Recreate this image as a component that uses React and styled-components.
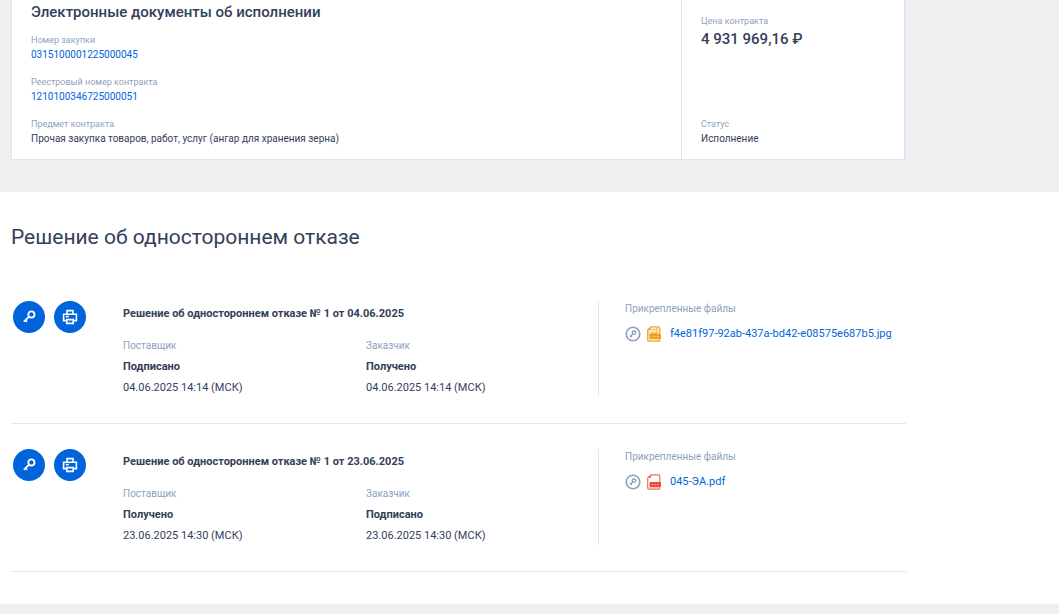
import React from 'react';
import styled, { createGlobalStyle } from 'styled-components';

const GlobalStyle = createGlobalStyle`
  * {
    box-sizing: border-box;
  }
  body {
    margin: 0;
    background: #eeeff1;
    color: #334059;
    font-family: Roboto, sans-serif;
    font-size: 11px;
    line-height: 14px;
  }
`;

const ContainerEl = styled.div`
  max-width: 917px;
  padding: 0 11px;
`;

const CardEl = styled.section`
  display: grid;
  grid-template-columns: 3fr 1fr;
  margin-bottom: 32px;
  background: #fff;
  border: 1px solid #dce4f0;
  border-top: 0;
  border-right-width: 2px;
  border-radius: 0 0 2px 2px;
`;

const CardMainEl = styled.div`
  padding: 2px 19px 13px;
`;

const CardSideEl = styled.div`
  display: flex;
  flex-direction: column;
  justify-content: space-between;
  padding: 15px 19px 13px;
  border-left: 1px solid #e0e3f0;
`;

const CardTitleEl = styled.h1`
  margin: 0 0 12px;
  font-size: 15px;
  line-height: 20px;
  font-weight: 500;
`;

const FieldEl = styled.div`
  & + & {
    margin-top: 14px;
  }
`;

const FieldLabelEl = styled.div`
  color: #909fbe;
  font-size: 9px;
  line-height: 12px;
`;

const FieldValueEl = styled.div`
  margin-top: 2px;
  font-size: 10px;
  line-height: 14px;
`;

const PriceEl = styled.div`
  margin-top: 2px;
  font-size: 15px;
  line-height: 20px;
  font-weight: 500;
`;

const LinkEl = styled.a`
  color: #0065dc;
  text-decoration: none;
  &:hover {
    text-decoration: underline;
  }
`;

const DocumentsEl = styled.main`
  padding: 32px 0;
  background: #fff;
`;

const HeadingEl = styled.h2`
  margin: 0 0 26px;
  font-size: 21px;
  line-height: 26px;
  font-weight: 400;
`;

const RowEl = styled.article`
  display: grid;
  grid-template-columns: 112px minmax(0, 475px) 1fr;
  padding: 25px 0 26px;
  border-bottom: 1px solid #e4e5f1;
`;

const ActionsEl = styled.div`
  display: flex;
  align-items: flex-start;
  gap: 9px;
  padding-left: 2px;
`;

const ActionButtonEl = styled.button`
  display: flex;
  align-items: center;
  justify-content: center;
  width: 32px;
  height: 32px;
  padding: 0;
  color: #fff;
  background: #0065dc;
  border: 0;
  border-radius: 50%;
  cursor: pointer;
`;

const RowTitleEl = styled.h3`
  margin: 0;
  padding: 6px 0 18px;
  font-size: 11px;
  line-height: 14px;
  font-weight: 700;
`;

const PartiesEl = styled.div`
  display: grid;
  grid-template-columns: 243px 1fr;
`;

const PartyEl = styled.div`
  display: flex;
  flex-direction: column;
  gap: 7px;
`;

const CaptionEl = styled.div`
  color: #909fbe;
  font-size: 10px;
  line-height: 14px;
`;

const StatusEl = styled.div`
  font-weight: 700;
`;

const FilesEl = styled.div`
  min-height: 96px;
  padding: 1px 0 0 26px;
  border-left: 1px solid #e4e5f1;
`;

const FileEl = styled.div`
  display: flex;
  align-items: center;
  gap: 6px;
  margin-top: 10px;
`;

const FileLinkEl = styled(LinkEl)`
  padding-left: 3px;
`;

const SignatureButtonEl = styled.button`
  display: flex;
  padding: 0;
  background: none;
  border: 0;
  cursor: pointer;
`;

const KeyIcon = () => (
  <svg width="16" height="16" viewBox="0 0 16 16" fill="none" stroke="currentColor" strokeWidth="1.8">
    <circle cx="10.4" cy="5.4" r="3.1" />
    <path d="M8.200 7.600 2.800 12.600M4 10.600l2 2.200" />
  </svg>
);

const PrinterIcon = () => (
  <svg width="16" height="16" viewBox="0 0 16 16" fill="none" stroke="currentColor" strokeWidth="1.6">
    <path d="M5 5V1.600h6V5M4.500 11.600H1.600V5.200h12.800v6.400h-2.900" />
    <path d="M4.800 10.600h6.400v3.800H4.800z" />
    <path d="M3.800 7.600h3" />
  </svg>
);

const SignatureIcon = () => (
  <svg width="16" height="16" viewBox="0 0 16 16" fill="none" stroke="#909fbe">
    <circle cx="8" cy="8" r="6.8" strokeWidth="1.6" />
    <circle cx="9" cy="6.7" r="1.7" strokeWidth="1.4" />
    <path d="M7.8 7.9 5 10.700M5.400 9.600l1.500 1.400" strokeWidth="1.4" />
  </svg>
);

const ImageFileIcon = () => (
  <svg width="14" height="16" viewBox="0 0 14 16">
    <path d="M4 .8h7.500a1.300 1.300 0 0 1 1.300 1.300v11.800a1.300 1.300 0 0 1-1.300 1.300H2A1.300 1.300 0 0 1 .7 13.900V4z" fill="#fbe6bb" stroke="#e9ad35" strokeWidth="1.3" />
    <path d="M4 .8V4H.7z" fill="#e9ad35" />
    <path d="M1.500 9.500 5 6l2 1.500L9.500 5.500l2.500 4z" fill="#e9ad35" />
    <path d="M6 3.500h2M9.500 2.500v2" stroke="#e9ad35" />
    <rect x="2.500" y="8" width="11.500" height="5" rx="1" fill="#e5a320" />
    <path d="M4.500 10.500h7.500" stroke="#f1c465" strokeDasharray="2 .8" />
  </svg>
);

const PdfFileIcon = () => (
  <svg width="14" height="16" viewBox="0 0 14 16">
    <path d="M4 .8h7.500a1.300 1.300 0 0 1 1.300 1.300v11.800a1.300 1.300 0 0 1-1.300 1.300H2A1.300 1.300 0 0 1 .7 13.900V4z" fill="#fff" stroke="#ec6f63" strokeWidth="1.2" />
    <path d="M4 .8V4H.7z" fill="#ec6f63" />
    <path d="M1.500 13.900h10.500" stroke="#f3a59d" />
    <rect x="2.500" y="8" width="11.500" height="5" rx="1" fill="#e74c3c" />
    <path d="M4.500 10.500h7.500" stroke="#f29a91" strokeDasharray="2 .8" />
  </svg>
);

const documents = [
  {
    id: 1,
    title: 'Решение об одностороннем отказе № 1 от 04.06.2025',
    date: '04.06.2025 14:14 (МСК)',
    supplier: 'Подписано',
    customer: 'Получено',
    file: 'f4e81f97-92ab-437a-bd42-e08575e687b5.jpg',
    FileIcon: ImageFileIcon,
  },
  {
    id: 2,
    title: 'Решение об одностороннем отказе № 1 от 23.06.2025',
    date: '23.06.2025 14:30 (МСК)',
    supplier: 'Получено',
    customer: 'Подписано',
    file: '045-ЭА.pdf',
    FileIcon: PdfFileIcon,
  },
];

const Field = ({ label, children }) => (
  <FieldEl>
    <FieldLabelEl>{label}</FieldLabelEl>
    <FieldValueEl>{children}</FieldValueEl>
  </FieldEl>
);

const Party = ({ name, status, date }) => (
  <PartyEl>
    <CaptionEl>{name}</CaptionEl>
    <StatusEl>{status}</StatusEl>
    <div>{date}</div>
  </PartyEl>
);

const DocumentRow = ({ title, date, supplier, customer, file, FileIcon }) => (
  <RowEl>
    <ActionsEl>
      <ActionButtonEl type="button" aria-label="Электронная подпись">
        <KeyIcon />
      </ActionButtonEl>
      <ActionButtonEl type="button" aria-label="Печать">
        <PrinterIcon />
      </ActionButtonEl>
    </ActionsEl>
    <div>
      <RowTitleEl>{title}</RowTitleEl>
      <PartiesEl>
        <Party name="Поставщик" status={supplier} date={date} />
        <Party name="Заказчик" status={customer} date={date} />
      </PartiesEl>
    </div>
    <FilesEl>
      <CaptionEl>Прикрепленные файлы</CaptionEl>
      <FileEl>
        <SignatureButtonEl type="button" aria-label="Подпись файла">
          <SignatureIcon />
        </SignatureButtonEl>
        <FileIcon />
        <FileLinkEl href="#file">{file}</FileLinkEl>
      </FileEl>
    </FilesEl>
  </RowEl>
);

const App = () => (
  <>
    <GlobalStyle />
    <ContainerEl>
      <CardEl>
        <CardMainEl>
          <CardTitleEl>Электронные документы об исполнении</CardTitleEl>
          <Field label="Номер закупки">
            <LinkEl href="#purchase">0315100001225000045</LinkEl>
          </Field>
          <Field label="Реестровый номер контракта">
            <LinkEl href="#contract">1210100346725000051</LinkEl>
          </Field>
          <Field label="Предмет контракта">Прочая закупка товаров, работ, услуг (ангар для хранения зерна)</Field>
        </CardMainEl>
        <CardSideEl>
          <div>
            <FieldLabelEl>Цена контракта</FieldLabelEl>
            <PriceEl>4 931 969,16 ₽</PriceEl>
          </div>
          <Field label="Статус">Исполнение</Field>
        </CardSideEl>
      </CardEl>
    </ContainerEl>
    <DocumentsEl>
      <ContainerEl>
        <HeadingEl>Решение об одностороннем отказе</HeadingEl>
        {documents.map((doc) => (
          <DocumentRow key={doc.id} {...doc} />
        ))}
      </ContainerEl>
    </DocumentsEl>
  </>
);

export default App;
